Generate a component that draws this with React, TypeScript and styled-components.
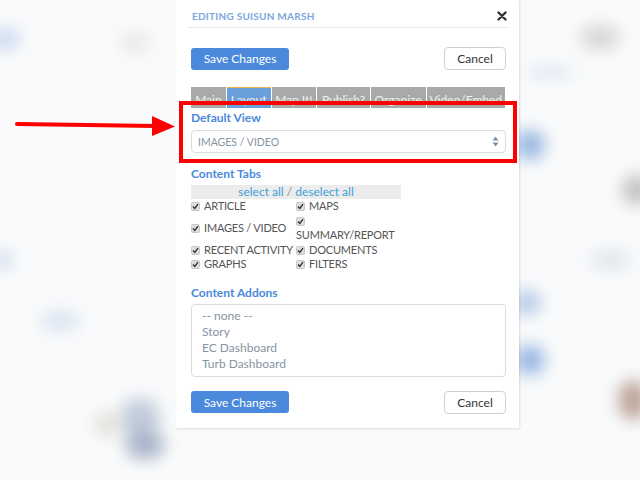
import React from "react";
import styled, { createGlobalStyle } from "styled-components";

const Global = createGlobalStyle`
  html, body { margin: 0; padding: 0; }
  body { font-family: Lato, "Open Sans", sans-serif; background: #f8f9fa; }
  * { box-sizing: border-box; }
`;

const Stage = styled.div`
  position: relative;
  width: 640px;
  height: 480px;
  overflow: hidden;
  background: #f9fafb;
  display: flex;
  align-items: flex-start;
  padding-left: 176px;
`;

const Blob = styled.div<{ $c: string }>`
  position: absolute;
  border-radius: 50%;
  background: ${(p) => p.$c};
  filter: blur(8px);
`;

const Modal = styled.div`
  position: relative;
  width: 343px;
  height: 428px;
  flex-shrink: 0;
  background: #fff;
  box-shadow: 1px 1px 2px rgba(0, 0, 0, 0.12);
  display: flex;
  flex-direction: column;
  z-index: 1;
`;

const Header = styled.div`
  flex-shrink: 0;
  margin: 0 10px 0 12px;
  height: 28px;
  border-bottom: 1px solid #e6e6e6;
  display: flex;
  align-items: center;
  justify-content: space-between;
  padding: 4px 2px 0 4px;
`;

const Title = styled.div`
  font-size: 10px;
  font-weight: 700;
  color: #7ba6dd;
  letter-spacing: 0.25px;
`;

const Body = styled.div`
  flex-shrink: 0;
  padding: 0 13px 0 15px;
  display: flex;
  flex-direction: column;
`;

const ButtonRow = styled.div<{ $mt: number }>`
  flex-shrink: 0;
  margin-top: ${(p) => p.$mt}px;
  height: 23px;
  display: flex;
  justify-content: space-between;
  align-items: center;
`;

const SaveButton = styled.button`
  width: 98px;
  height: 22px;
  border: none;
  border-radius: 3px;
  background: #4a89dc;
  color: #fff;
  font-family: Lato, sans-serif;
  font-size: 12px;
  padding: 0;
`;

const CancelButton = styled.button`
  width: 62px;
  height: 23px;
  border: 1px solid #cfcfcf;
  border-radius: 4px;
  background: #fff;
  color: #333;
  font-family: Lato, sans-serif;
  font-size: 12px;
  padding: 0;
`;

const Tabs = styled.div`
  margin-top: 17px;
  display: flex;
  height: 21px;
  flex-shrink: 0;
  overflow: hidden;
`;

const Tab = styled.div<{ $w: number; $active?: boolean }>`
  width: ${(p) => p.$w}px;
  height: 21px;
  margin-right: 1px;
  background: ${(p) => (p.$active ? "#6a9fdc" : "#a9a9a9")};
  border-top: 1px solid ${(p) => (p.$active ? "#f2b04a" : "#a9a9a9")};
  color: #f1f1f1;
  font-size: 12px;
  text-align: center;
  line-height: 14px;
  padding-top: 5px;
  white-space: nowrap;
  overflow: hidden;
`;

const Label = styled.div<{ $mt: number }>`
  flex-shrink: 0;
  margin-top: ${(p) => p.$mt}px;
  font-size: 12px;
  font-weight: 700;
  color: #4a89dc;
  line-height: 14px;
`;

const Select = styled.div`
  flex-shrink: 0;
  margin-top: 5px;
  height: 23px;
  border: 1px solid #dcdcdc;
  border-radius: 4px;
  display: flex;
  align-items: center;
  justify-content: space-between;
  padding: 0 6px 0 6px;
  color: #8594a3;
  font-size: 10.5px;
`;

const SelectAllBar = styled.div`
  flex-shrink: 0;
  margin-top: 4px;
  width: 210px;
  height: 14px;
  background: #ececec;
  text-align: center;
  font-size: 12px;
  line-height: 14px;
  color: #888;
`;

const LinkText = styled.span`
  color: #3ea0d8;
`;

const CheckGrid = styled.div`
  flex-shrink: 0;
  display: grid;
  grid-template-columns: 105px 105px;
  align-items: center;
  margin-top: 0;
`;

const CheckItem = styled.div<{ $nowrap?: boolean }>`
  font-size: 11px;
  letter-spacing: -0.2px;
  color: #555;
  line-height: 14.5px;
  text-transform: uppercase;
  white-space: ${(p) => (p.$nowrap ? "nowrap" : "normal")};
`;

const Box = styled.span`
  display: inline-block;
  width: 9px;
  height: 9px;
  border-radius: 2px;
  background: #dedede;
  border: 1px solid #c8c8c8;
  margin-right: 4px;
  vertical-align: -1px;
  position: relative;
  svg { position: absolute; left: 0; top: 0; }
`;

const ListBox = styled.div`
  flex-shrink: 0;
  margin-top: 4px;
  height: 73px;
  border: 1px solid #dcdcdc;
  border-radius: 4px;
  padding: 3px 10px 0;
  overflow: hidden;
  color: #8594a3;
  font-size: 12px;
  line-height: 16.3px;
`;

const Annot = styled.div`
  position: absolute;
  left: 179px;
  top: 101px;
  width: 338px;
  height: 62px;
  border: 4px solid #ff0000;
  z-index: 3;
`;

const ArrowSvg = styled.svg`
  position: absolute;
  left: 0;
  top: 110px;
  z-index: 3;
`;

function Check() {
  return (
    <Box>
      <svg width="7" height="7" viewBox="0 0 7 7">
        <path d="M1 3.6 L2.8 5.4 L6 1.2" stroke="#333" strokeWidth="1.4" fill="none" />
      </svg>
    </Box>
  );
}

const tabs: [string, number, boolean?][] = [
  ["Main", 35],
  ["Layout", 44, true],
  ["Map It!", 45],
  ["Publish?", 53],
  ["Organize", 55],
  ["Video/Embed", 79],
];

export default function App() {
  return (
    <>
      <Global />
      <Stage>
        <Blob $c="rgba(120,160,220,0.35)" style={{ left: -10, top: 28, width: 30, height: 22 }} />
        <Blob $c="rgba(200,200,200,0.35)" style={{ left: 120, top: 32, width: 30, height: 20 }} />
        <Blob $c="rgba(120,160,220,0.25)" style={{ left: 40, top: 312, width: 40, height: 18 }} />
        <Blob $c="rgba(120,160,220,0.3)" style={{ left: -8, top: 250, width: 20, height: 20 }} />
        <Blob $c="rgba(140,160,190,0.5)" style={{ left: 120, top: 398, width: 40, height: 40 }} />
        <Blob $c="rgba(120,140,170,0.6)" style={{ left: 125, top: 430, width: 40, height: 30 }} />
        <Blob $c="rgba(190,190,170,0.4)" style={{ left: 95, top: 412, width: 25, height: 25 }} />
        <Blob $c="rgba(90,140,210,0.6)" style={{ left: 515, top: 130, width: 30, height: 30 }} />
        <Blob $c="rgba(90,140,210,0.45)" style={{ left: 515, top: 290, width: 25, height: 25 }} />
        <Blob $c="rgba(90,140,210,0.6)" style={{ left: 515, top: 345, width: 30, height: 30 }} />
        <Blob $c="rgba(150,150,150,0.35)" style={{ left: 580, top: 25, width: 40, height: 25 }} />
        <Blob $c="rgba(120,160,220,0.25)" style={{ left: 525, top: 68, width: 50, height: 10 }} />
        <Blob $c="rgba(140,140,140,0.5)" style={{ left: 622, top: 175, width: 30, height: 30 }} />
        <Blob $c="rgba(150,110,90,0.6)" style={{ left: 618, top: 380, width: 30, height: 40 }} />
        <Blob $c="rgba(150,170,200,0.25)" style={{ left: 590, top: 250, width: 40, height: 20 }} />
        <Modal>
          <Header>
            <Title>EDITING SUISUN MARSH</Title>
            <svg width="10" height="10" viewBox="0 0 10 10">
              <path d="M1.5 1.5 L8.5 8.5 M8.5 1.5 L1.5 8.5" stroke="#333" strokeWidth="2.4" strokeLinecap="round" />
            </svg>
          </Header>
          <Body>
            <ButtonRow $mt={19}>
              <SaveButton>Save Changes</SaveButton>
              <CancelButton>Cancel</CancelButton>
            </ButtonRow>
            <Tabs>
              {tabs.map(([t, w, a]) => (
                <Tab key={t} $w={w} $active={a}>
                  {t}
                </Tab>
              ))}
            </Tabs>
            <Label $mt={3}>Default View</Label>
            <Select>
              <span>IMAGES / VIDEO</span>
              <svg width="7" height="11" viewBox="0 0 7 11">
                <path d="M3.5 0.5 L6.5 4.5 L0.5 4.5 Z M3.5 10.5 L6.5 6.5 L0.5 6.5 Z" fill="#7f93a8" />
              </svg>
            </Select>
            <Label $mt={14}>Content Tabs</Label>
            <SelectAllBar>
              <LinkText>select all</LinkText> / <LinkText>deselect all</LinkText>
            </SelectAllBar>
            <CheckGrid>
              <CheckItem><Check />Article</CheckItem>
              <CheckItem><Check />Maps</CheckItem>
              <CheckItem $nowrap><Check />Images / Video</CheckItem>
              <CheckItem><Check /><br />Summary/Report</CheckItem>
              <CheckItem $nowrap><Check />Recent Activity</CheckItem>
              <CheckItem><Check />Documents</CheckItem>
              <CheckItem><Check />Graphs</CheckItem>
              <CheckItem><Check />Filters</CheckItem>
            </CheckGrid>
            <Label $mt={14}>Content Addons</Label>
            <ListBox>
              <div>-- none --</div>
              <div>Story</div>
              <div>EC Dashboard</div>
              <div>Turb Dashboard</div>
              <div>Field Visits</div>
            </ListBox>
            <ButtonRow $mt={14}>
              <SaveButton>Save Changes</SaveButton>
              <CancelButton>Cancel</CancelButton>
            </ButtonRow>
          </Body>
        </Modal>
        <Annot />
        <ArrowSvg width="180" height="30" viewBox="0 0 180 30">
          <path d="M17 14 L156 16" stroke="#ff0000" strokeWidth="4" strokeLinecap="round" />
          <path d="M152 6 L175 16.5 L152 26 Z" fill="#ff0000" />
        </ArrowSvg>
      </Stage>
    </>
  );
}
